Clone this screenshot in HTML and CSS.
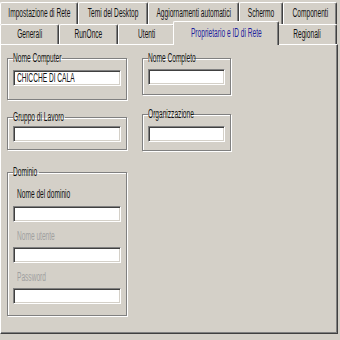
FILE: index.html
```html
<!DOCTYPE html>
<html lang="it">
<head>
<meta charset="utf-8">
<title>Proprietario e ID di Rete</title>
<link rel="stylesheet" href="styles.css">
</head>
<body>
<div class="win">
  <div class="row r1">
    <div class="tab tw1"><span class="t">Impostazione di Rete</span></div>
    <div class="tab tw2"><span class="t">Temi del Desktop</span></div>
    <div class="tab tw3"><span class="t">Aggiornamenti automatici</span></div>
    <div class="tab tw4"><span class="t">Schermo</span></div>
    <div class="tab tw5"><span class="t">Componenti</span></div>
  </div>
  <div class="row r2">
    <div class="tab tw6"><span class="t">Generali</span></div>
    <div class="tab tw6"><span class="t">RunOnce</span></div>
    <div class="tab tw7"><span class="t">Utenti</span></div>
    <div class="tab sel tw8"><span class="t">Proprietario e ID di Rete</span></div>
    <div class="tab tw9"><span class="t">Regionali</span></div>
  </div>
  <div class="panel">
    <div class="col left">
      <fieldset class="grp g-nc">
        <legend class="lg lw-nc"><span class="t">Nome Computer</span></legend>
        <div class="inp"><span class="t">CHICCHE DI CALA</span></div>
      </fieldset>
      <fieldset class="grp g-gl">
        <legend class="lg lw-gl"><span class="t">Gruppo di Lavoro</span></legend>
        <div class="inp"></div>
      </fieldset>
      <fieldset class="grp g-dom">
        <legend class="lg lw-dom"><span class="t">Dominio</span></legend>
        <div class="lab"><span class="t">Nome del dominio</span></div>
        <div class="inp"></div>
        <div class="lab dis"><span class="t">Nome utente</span></div>
        <div class="inp"></div>
        <div class="lab dis"><span class="t">Password</span></div>
        <div class="inp"></div>
      </fieldset>
    </div>
    <div class="col right">
      <fieldset class="grp g-ncomp">
        <legend class="lg lw-ncomp"><span class="t">Nome Completo</span></legend>
        <div class="inp"></div>
      </fieldset>
      <fieldset class="grp g-org">
        <legend class="lg lw-org"><span class="t">Organizzazione</span></legend>
        <div class="inp"></div>
      </fieldset>
    </div>
  </div>
</div>
</body>
</html>
```
FILE: styles.css
```css
html, body {
  margin: 0;
  padding: 0;
}
body {
  background: #d4d0c8;
  font: 12px/12px "Liberation Sans", Arial, sans-serif;
  color: #111;
  width: 340px;
  height: 340px;
  overflow: hidden;
}
.win {
  padding-top: 2px;
  width: 338px;
}
.row {
  display: flex;
  height: 22px;
}
.r2 {
  height: 20px;
}
.tab {
  box-sizing: border-box;
  border-top: 1px solid #fff;
  border-left: 1px solid #fff;
  border-right: 1px solid #404040;
  box-shadow: inset -1px 0 0 #808080;
  border-radius: 2px 2px 0 0;
  display: flex;
  align-items: center;
  justify-content: center;
  white-space: nowrap;
  padding-bottom: 1px;
}
.t {
  display: inline-block;
  transform: scaleX(0.55);
  transform-origin: left center;
  white-space: nowrap;
}
.tab .t {
  transform-origin: center center;
  flex: none;
}
.tw1 { width: 78px; }
.tw2 { width: 70px; }
.tw3 { width: 91px; }
.tw4 { width: 44px; }
.tw5 { width: 54px; }
.tw6 { width: 59px; }
.tw7 { width: 57px; }
.tw8 { width: 102px; }
.tw9 { width: 60px; }
.sel {
  position: relative;
  z-index: 2;
  margin: -3px -2px -1px -2px;
  width: 106px;
  height: 24px;
  background: #d4d0c8;
  color: #22229c;
  padding-bottom: 2px;
}
.panel {
  box-sizing: border-box;
  height: 290px;
  border-top: 1px solid #fff;
  border-left: 1px solid #fff;
  border-right: 1px solid #404040;
  border-bottom: 1px solid #404040;
  box-shadow: inset -1px -1px 0 #808080;
  padding: 7px 0 0 6px;
  display: flex;
  gap: 15px;
  align-items: flex-start;
}
.col {
  display: flex;
  flex-direction: column;
}
.left { width: 120px; }
.right { width: 89px; }
.grp {
  margin: 0;
  min-width: 0;
  border: 1px solid #808080;
  box-shadow: 1px 1px 0 #fff, inset 1px 1px 0 #fff;
  padding: 0 5px;
}
.lg {
  padding: 0;
  height: 12px;
  white-space: nowrap;
  overflow: visible;
}
.lw-nc { width: 49px; }
.lw-gl { width: 52px; }
.lw-dom { width: 26px; }
.lw-ncomp { width: 46px; }
.lw-org { width: 45px; }
.g-nc { padding-top: 6px; padding-bottom: 13px; }
.g-gl { margin-top: 11px; padding-top: 3px; padding-bottom: 7px; }
.g-dom { margin-top: 16px; padding-top: 10px; padding-bottom: 11px; }
.g-ncomp { padding-top: 5px; padding-bottom: 9px; }
.g-org { margin-top: 13px; padding-top: 6px; padding-bottom: 8px; }
.inp {
  box-sizing: border-box;
  height: 16px;
  background: #fff;
  border-top: 1px solid #808080;
  border-left: 1px solid #808080;
  border-right: 1px solid #fff;
  border-bottom: 1px solid #fff;
  box-shadow: inset 1px 1px 0 #404040, inset -1px -1px 0 #d4d0c8;
  padding: 1px 0 0 3px;
  line-height: 13px;
}
.lab {
  height: 12px;
  padding-left: 4px;
  margin-bottom: 6px;
}
.lab.dis {
  color: #a0a0a0;
  margin-top: 8px;
  margin-bottom: 5px;
}
```
